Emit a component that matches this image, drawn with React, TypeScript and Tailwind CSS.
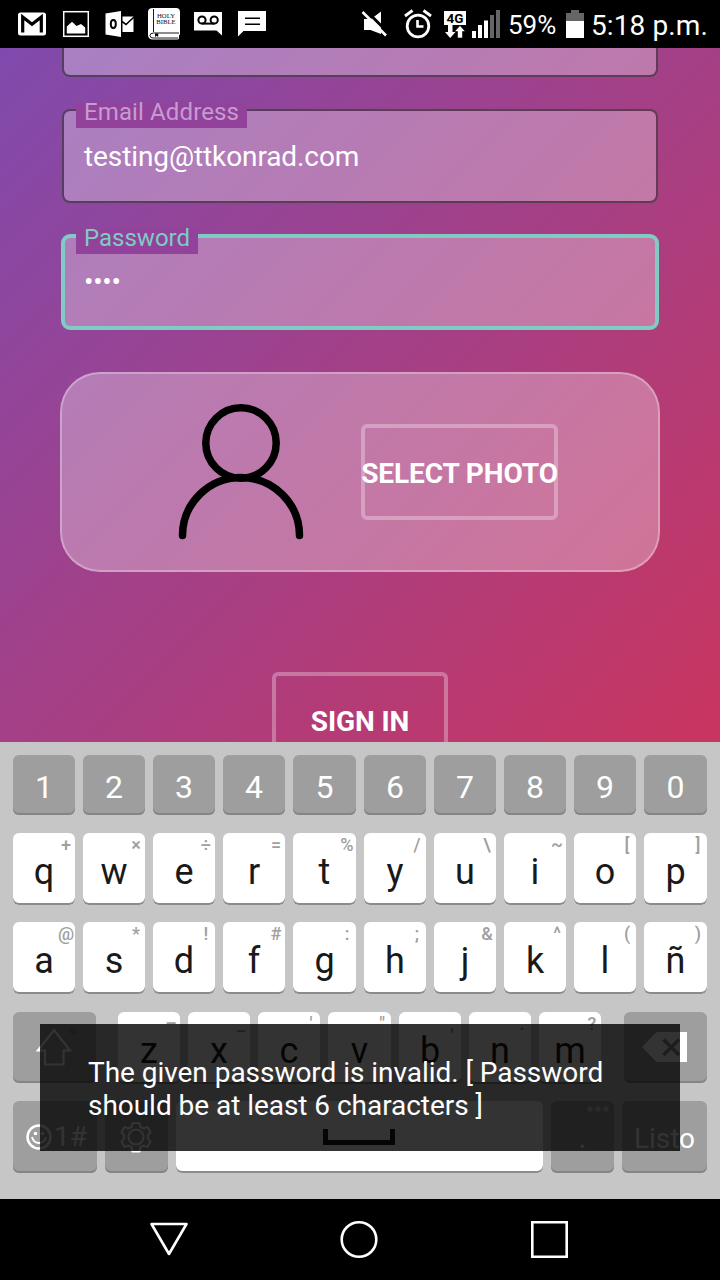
import React from "react";

type KeyDef = { c: string; hint?: string; wide?: boolean };

const numbers = "1234567890".split("");
const row2: KeyDef[] = [
  { c: "q", hint: "+" }, { c: "w", hint: "×" }, { c: "e", hint: "÷" }, { c: "r", hint: "=" }, { c: "t", hint: "%", wide: true },
  { c: "y", hint: "/" }, { c: "u", hint: "\\" }, { c: "i", hint: "~" }, { c: "o", hint: "[" }, { c: "p", hint: "]", wide: true },
];
const row3: KeyDef[] = [
  { c: "a", hint: "@" }, { c: "s", hint: "*" }, { c: "d", hint: "!" }, { c: "f", hint: "#" }, { c: "g", hint: ":", wide: true },
  { c: "h", hint: ";" }, { c: "j", hint: "&" }, { c: "k", hint: "^" }, { c: "l", hint: "(" }, { c: "ñ", hint: ")", wide: true },
];
const row4: KeyDef[] = [
  { c: "z", hint: "–" }, { c: "x", hint: "_" }, { c: "c", hint: "'" }, { c: "v", hint: "\"", wide: true },
  { c: "b", hint: "," }, { c: "n", hint: "." }, { c: "m", hint: "?" },
];

const lightKey = "relative shrink-0 rounded-[6px] bg-white shadow-[inset_0_-2px_0_#8b8b8b]";
const darkKey = "relative shrink-0 rounded-[6px] bg-[#9e9e9e] shadow-[inset_0_-2px_0_#858585]";

function LetterKey({ c, hint, wide }: KeyDef) {
  return (
    <div className={lightKey + (wide ? " w-[63px]" : " w-[62px]") + " h-[72px] text-center text-[36px] leading-[79px] text-[#191919]"}>
      {c}
      {hint && (
        <span className="absolute right-0 top-px w-[18px] text-center text-[18px] font-medium leading-[22px] text-[#a0a0a0]">
          <span className="-mx-2 block">{hint}</span>
        </span>
      )}
    </div>
  );
}

function StatusBar() {
  return (
    <header className="flex h-12 shrink-0 items-center bg-black pl-[18px] pr-3 text-white">
      <svg className="h-12 w-[28px] shrink-0" viewBox="18 0 28 48">
        <rect x="18" y="12.5" width="28" height="23" rx="2.5" fill="#fff" />
        <path d="M22.7 32.5V17L32 24.3L41.3 17v15.500" fill="none" stroke="#000" strokeWidth="3.200" />
      </svg>
      <svg className="ml-[17px] h-12 w-[26px] shrink-0" viewBox="63 0 26 48">
        <rect x="63.700" y="11.700" width="24.600" height="24.600" fill="none" stroke="#fff" strokeWidth="1.500" />
        <path d="M66.800 33.500V26.500L72 21.800L76.500 26L81 24L85.200 27.500v6z" fill="#fff" />
      </svg>
      <svg className="ml-4 h-12 w-[30px] shrink-0" viewBox="105 0 30 48">
        <path d="M105.500 13.500L121 11v26l-15.500-2.500z" fill="#fff" />
        <path d="M122.500 16.500H133.500V32H122.500z" fill="#fff" />
        <ellipse cx="113.300" cy="24" rx="2.500" ry="4" fill="none" stroke="#000" strokeWidth="2" />
        <path d="M122 21.500L126 24.500L134 17" fill="none" stroke="#000" strokeWidth="1.600" />
      </svg>
      <svg className="ml-[13px] h-12 w-8 shrink-0" viewBox="148 0 32 48">
        <path d="M153 8h23q4 0 4 4v21q0 2-1 2.500v2.500q0 1.500-2 1.500H153q-5 0-5-5V12q0-4 5-4z" fill="#fff" />
        <path d="M153.500 9v23M150 35.500q0-2.500 3.500-2.500H179M178 38H153q-3 0-3-2.500" fill="none" stroke="#000" strokeWidth=".9" />
        <path d="M155 33.500h3.200v3.500l-1.600-1.200L155 37z" fill="#000" />
        <text x="166" y="17.500" textAnchor="middle" fontFamily="Liberation Serif, serif" fontSize="7" fill="#111" textLength="18" lengthAdjust="spacingAndGlyphs">HOLY</text>
        <text x="166" y="24.300" textAnchor="middle" fontFamily="Liberation Serif, serif" fontSize="7" fill="#111" textLength="19.500" lengthAdjust="spacingAndGlyphs">BIBLE</text>
      </svg>
      <svg className="ml-[14px] h-12 w-[28px] shrink-0" viewBox="194 0 28 48">
        <path d="M194 12H222V35.500L216.500 30.500H194z" fill="#fff" />
        <circle cx="202" cy="20" r="3.600" fill="none" stroke="#000" strokeWidth="2" />
        <circle cx="214.200" cy="20" r="3.600" fill="none" stroke="#000" strokeWidth="2" />
        <path d="M202 23.600H214.500" stroke="#000" strokeWidth="2" />
      </svg>
      <svg className="ml-4 h-12 w-[28px] shrink-0" viewBox="238 0 28 48">
        <path d="M238 11H266V31H243.500L238 36.500z" fill="#fff" />
        <path d="M245 18.300H260M245 24.300H260" stroke="#000" strokeWidth="1.500" />
      </svg>
      <svg className="ml-[95px] h-12 w-[28px] shrink-0" viewBox="361 0 28 48">
        <path d="M364 19H371L381 11.500V34L370.500 30H364z" fill="#fff" />
        <path d="M365 9.500L388.500 33" stroke="#000" strokeWidth="3" />
        <path d="M362.500 12L386 35.500" stroke="#fff" strokeWidth="2.600" />
      </svg>
      <svg className="ml-[15px] h-12 w-[28px] shrink-0" viewBox="404 0 28 48">
        <circle cx="418" cy="26" r="10.800" fill="none" stroke="#fff" strokeWidth="2.800" />
        <path d="M417.500 20V26.500H423.500" fill="none" stroke="#fff" strokeWidth="2.600" />
        <path d="M405 16L412.500 10.500M431 16L423.500 10.500" stroke="#fff" strokeWidth="2.800" />
      </svg>
      <svg className="ml-3 h-12 w-[56px] shrink-0" viewBox="444 0 56 48">
        <path d="M444 11H466V25H444z" fill="#fff" />
        <text x="455" y="22.800" textAnchor="middle" fontFamily="Roboto, sans-serif" fontWeight="700" fontSize="13.500" fill="#000">4G</text>
        <path d="M448 24h4.500v8h3L450.200 38L445 32h3z" fill="#fff" />
        <path d="M457.500 38V31.500H454.500L460 25.500L465.300 31.500H462.500V38z" fill="#fff" stroke="#000" strokeWidth=".6" />
        <path d="M472 31h4v7h-4zM478 25h4v13h-4zM484 20.500h4V38h-4z" fill="#fff" />
        <path d="M490 15h4v23h-4zM496 10h4v28h-4z" fill="#666" />
      </svg>
      <span className="ml-[8px] w-[58px] shrink-0 pt-[2px] text-[26px] leading-[50px]">59%</span>
      <svg className="h-12 w-[18px] shrink-0" viewBox="566 0 18 48">
        <path d="M571 10h8v3h5v8h-18v-8h5z" fill="#666" />
        <path d="M566 21h18v17h-18z" fill="#fff" />
      </svg>
      <span className="ml-[7px] shrink-0 whitespace-nowrap pt-[3px] text-[28px] leading-[50px] tracking-[0.1px]">5:18 p.m.</span>
    </header>
  );
}

function Form() {
  return (
    <main className="flex h-[694px] shrink-0 flex-col overflow-hidden bg-linear-[135deg] from-[#804aad] to-[#c9355f] px-[61px] text-white">
      <div className="mx-px h-[29px] shrink-0 rounded-b-[8px] border-2 border-t-0 border-black/50 bg-white/30" />
      <div className="relative mx-px mt-8 h-[94px] shrink-0 rounded-[8px] border-2 border-black/50 bg-white/30 pl-5 pt-[28px]">
        <span className="absolute -top-2 left-3 h-[25px] w-[171px] whitespace-nowrap bg-[#92429a] px-2 text-[24px] leading-[19px] tracking-[0.12px] text-[#c69bd2]">Email Address</span>
        <div className="text-[28px] leading-9 tracking-[-0.1px]">testing@ttkonrad.com</div>
      </div>
      <div className="relative mt-[31px] h-[96px] shrink-0 rounded-[9px] border-4 border-[#80cbc4] bg-white/30 pl-[19px] pt-[26px]">
        <span className="absolute -top-[9px] left-[11px] h-[25px] w-[122px] bg-[#92429a] px-2 text-[24px] leading-[19px] text-[#80cbc4]">Password</span>
        <div className="text-[28px] leading-9 tracking-[-0.3px]">••••</div>
      </div>
      <section className="-mx-px mt-[42px] flex h-[200px] shrink-0 rounded-[40px] border-2 border-white/30 bg-white/30">
        <svg className="ml-[112px] mt-7 h-[144px] w-[134px] shrink-0" viewBox="174 402 134 144" fill="none" stroke="#000" strokeWidth="7.500" strokeLinecap="round">
          <circle cx="241" cy="443" r="35.200" />
          <path d="M182.500 535.500a58.500 58 0 0 1 117 0" />
        </svg>
        <button className="ml-[53px] mt-[50px] flex h-24 w-[197px] shrink-0 items-center justify-center whitespace-nowrap rounded-[6px] border-4 border-white/30 pt-[4px] text-[28px] font-bold tracking-[-0.1px]">SELECT PHOTO</button>
      </section>
      <button className="mt-[100px] flex h-24 w-44 shrink-0 items-center justify-center self-center rounded-[6px] border-4 border-white/30 pt-[4px] text-[28px] font-bold tracking-[-0.1px]">SIGN IN</button>
    </main>
  );
}

function Keyboard() {
  return (
    <section className="h-[457px] shrink-0 bg-[#c6c6c6] px-[13px] pt-[13px]">
      <div className="flex gap-2">
        {numbers.map((n) => (
          <div key={n} className={darkKey + (n === "5" || n === "0" ? " w-[63px]" : " w-[62px]") + " h-[60px] text-center text-[32px] leading-[64px] text-white"}>{n}</div>
        ))}
      </div>
      <div className="mt-[18px] flex gap-2">{row2.map((k) => <LetterKey key={k.c} {...k} />)}</div>
      <div className="mt-[17px] flex gap-2">{row3.map((k) => <LetterKey key={k.c} {...k} />)}</div>
      <div className="mt-[18px] flex">
        <div className={darkKey + " h-[71px] w-[83px]"}>
          <svg className="h-full w-full" viewBox="13 1012 83 71" fill="none" stroke="#fff" strokeWidth="2.200">
            <path d="M54 1030L70 1050.500H63.500V1064.500H45V1050.500H38z" />
            <circle cx="73" cy="1031" r="3.500" fill="#8a8a8a" stroke="none" />
          </svg>
        </div>
        <div className="ml-[22px] mr-[23px] flex gap-2">{row4.map((k) => <LetterKey key={k.c} {...k} />)}</div>
        <div className={darkKey + " h-[71px] w-[83px]"}>
          <svg className="h-full w-full" viewBox="624 1012 83 71">
            <path d="M642 1047L656.500 1032H687v30H656.500z" fill="#fff" />
            <path d="M663.500 1039.500L679 1055M679 1039.500L663.500 1055" stroke="#8f8f8f" strokeWidth="3.500" />
          </svg>
        </div>
      </div>
      <div className="mt-[17px] flex gap-2 text-white">
        <div className={darkKey + " flex h-[72px] w-[84px] items-center pl-[13px]"}>
          <svg className="h-[26px] w-[26px] shrink-0" viewBox="0 0 26 26" fill="none" stroke="#fff" strokeWidth="2.500">
            <circle cx="13" cy="13" r="11.500" />
            <path d="M6 13q1.500 6 7 6t7-6" strokeWidth="2" />
            <circle cx="9.500" cy="9.500" r="1.800" fill="#fff" stroke="none" />
            <circle cx="16.500" cy="9.500" r="1.800" fill="#fff" stroke="none" />
          </svg>
          <span className="ml-0.5 text-[28px]">1#</span>
        </div>
        <div className={darkKey + " h-[72px] w-[63px]"}>
          <svg className="h-full w-full" viewBox="105 1101 63 72" fill="none" stroke="#fff" strokeWidth="2.200" strokeLinejoin="round">
            <circle cx="136" cy="1137" r="7.500" />
            <path d="M132.500 1123h7l1 4 3 1.500 4-1.500 3 5.500-2.800 3v3l2.800 3-3 5.500-4-1.500-3 1.500-1 4.500h-7l-1-4.500-3-1.500-4 1.500-3-5.500 2.800-3v-3l-2.800-3 3-5.500 4 1.500 3-1.500z" />
          </svg>
        </div>
        <div className={lightKey + " h-[72px] w-[367px]"}>
          <svg className="h-full w-full" viewBox="176 1101 367 72">
            <path d="M325.500 1129v13.500h67V1129" fill="none" stroke="#191919" strokeWidth="5" />
          </svg>
        </div>
        <div className={darkKey + " h-[72px] w-[63px] text-center text-[32px] leading-[72px]"}>
          .
          <svg className="absolute right-1 top-1 h-2 w-6" viewBox="0 0 24 8" fill="#d0d0d0">
            <circle cx="4" cy="4" r="2.800" />
            <circle cx="12" cy="4" r="2.800" />
            <circle cx="20" cy="4" r="2.800" />
          </svg>
        </div>
        <div className={darkKey + " h-[72px] w-[85px] text-center text-[28px] leading-[75px]"}>Listo</div>
      </div>
    </section>
  );
}

export default function App() {
  return (
    <div className="relative flex h-[1280px] w-[720px] flex-col overflow-hidden bg-black font-[Roboto,sans-serif]">
      <StatusBar />
      <Form />
      <Keyboard />
      <nav className="flex h-[81px] shrink-0 items-center justify-between bg-black pb-px pl-[149px] pr-[151px]">
        <svg className="h-10 w-10" viewBox="149 1219 40 40"><path d="M151.500 1224H186.500L169 1254z" fill="none" stroke="#fff" strokeWidth="2.600" strokeLinejoin="round" /></svg>
        <svg className="h-10 w-10" viewBox="339 1219 40 40"><circle cx="359" cy="1239.500" r="17.300" fill="none" stroke="#fff" strokeWidth="2.600" /></svg>
        <svg className="h-10 w-10" viewBox="529 1219 40 40"><path d="M532.300 1222.300h34.400v34.400h-34.400z" fill="none" stroke="#fff" strokeWidth="2.600" /></svg>
      </nav>
      <div className="absolute left-10 top-[1024px] h-[127px] w-[640px] bg-black/80 pl-12 pt-8 text-[28px] leading-[33px] tracking-[-0.04px] text-white">
        The given password is invalid. [ Password<br />should be at least 6 characters ]
      </div>
    </div>
  );
}
